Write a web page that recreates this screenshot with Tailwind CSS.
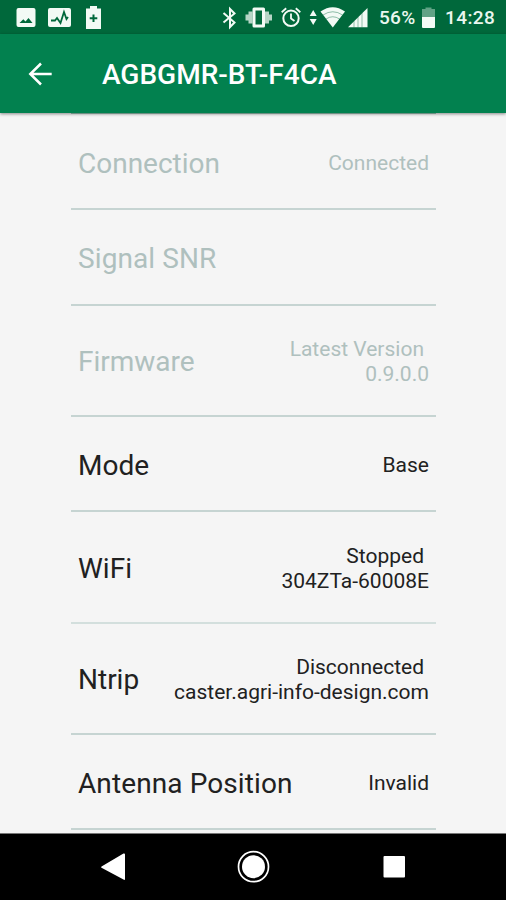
<!DOCTYPE html>
<html lang="en">
<head>
<meta charset="utf-8">
<title>AGBGMR-BT-F4CA</title>
<script src="https://cdn.jsdelivr.net/npm/@tailwindcss/browser@4"></script>
</head>
<body class="w-[506px] h-[900px] overflow-hidden bg-[#f5f5f5] font-['Roboto',sans-serif] flex flex-col">
  <div class="h-[34px] shrink-0 bg-[#00683b] text-[#eaf7ef]">
    <div class="h-full flex items-center relative">
      <svg class="w-full h-[34px]" viewBox="0 0 506 34" fill="#f3faf5">
        <!-- picture -->
        <path fill-rule="evenodd" d="M18.500 8h15a2 2 0 0 1 2 2v15a2 2 0 0 1-2 2h-15a2 2 0 0 1-2-2V10a2 2 0 0 1 2-2zM19.500 23h13l-4-5-3 3.500-2.200-2.300z"/>
        <!-- activity -->
        <rect x="48" y="8" width="23" height="19" rx="2"/>
        <path d="M51 20.500h4l2-2.500 3.500 5 3.500-11 2.500 7 1.500-2" fill="none" stroke="#00683b" stroke-width="1.800"/>
        <!-- battery saver -->
        <path fill-rule="evenodd" d="M90 6h7v2.500h4V29H86V8.500h4zM92.500 14.500v2.800h-2.800v2h2.800v2.800h2v-2.800h2.800v-2h-2.800v-2.800z"/>
        <!-- bluetooth -->
        <path d="M223.500 13l11 9.500-4.500 4.500V9l4.500 4.500-11 9" fill="none" stroke="#f3faf5" stroke-width="2"/>
        <!-- vibrate -->
        <path fill-rule="evenodd" d="M254 7.500h9.500a1.500 1.500 0 0 1 1.500 1.500v17a1.500 1.500 0 0 1-1.500 1.500H254a1.500 1.500 0 0 1-1.500-1.500V9a1.500 1.500 0 0 1 1.500-1.500zM255.500 10.500v14h6.500v-14z"/>
        <path d="M248.500 11.500h4v12h-4zM265 11.500h4v12h-4zM245.500 14.500h3v6h-3zM269 14.500h3v6h-3z" opacity=".75"/>
        <!-- alarm -->
        <circle cx="291" cy="18.300" r="7.700" fill="none" stroke="#f3faf5" stroke-width="2"/>
        <path d="M291 13.500v5l3.500 2.500M281.700 12.200l4.500-3.900M300.300 12.200l-4.500-3.900" fill="none" stroke="#f3faf5" stroke-width="1.800"/>
        <!-- data arrows -->
        <path d="M313.200 10l3.500 6h-7zM313.200 25l-3.500-6h7z"/>
        <!-- wifi -->
        <path d="M332.800 27.500L320.500 11.500Q332.800 3 345 11.500z"/>
        <path d="M323 15q9.800-6.500 19.600 0M326 19q6.800-4.500 13.600 0" fill="none" stroke="#00683b" stroke-width=".7" opacity=".6"/>
        <!-- cellular -->
        <path d="M348 27.300L367.500 8v19.300z"/>
        <path d="M354 21v6.300M358 17v10.300M362 13v14.300" stroke="#00683b" stroke-width=".8" opacity=".5"/>
        <!-- battery -->
        <path d="M425.500 7.500h6V9h3.500v8.500h-13V9h3.500z" opacity=".4"/>
        <path d="M422 17h13v10a1 1 0 0 1-1 1h-11a1 1 0 0 1-1-1z"/>
      </svg>
      <span class="absolute left-[379px] top-[7px] text-[19px] leading-[22px] font-medium tracking-[0.3px] whitespace-nowrap">56%</span>
      <span class="absolute left-[445px] top-[7px] text-[19px] leading-[22px] font-medium tracking-[0.4px] whitespace-nowrap">14:28</span>
    </div>
  </div>
  <header class="h-[79px] shrink-0 bg-[#02814f] flex items-center pl-[28px] shadow-[0_1px_3px_rgba(0,0,0,0.45)] relative z-10">
    <svg class="w-[24px] h-[24px] shrink-0" viewBox="0 0 24 24" fill="none" stroke="#fff" stroke-width="2.500"><path d="M23.700 12H2.500M13 1.500L2.300 12 13 22.500"/></svg>
    <h1 class="ml-[50px] pt-[3px] text-[28px] leading-[32px] font-medium text-white whitespace-nowrap">AGBGMR-BT-F4CA</h1>
    <div class="absolute left-[71px] bottom-[-1px] w-[365px] h-px bg-[#6f8f83]"></div>
  </header>
  <main class="w-[365px] ml-[71px] h-[720px] shrink-0 overflow-hidden text-[28px] leading-[33px] text-[#212121] whitespace-nowrap">
    <section class="h-[97px] pt-[5px] px-[7px] border-b-2 border-[#c6d4d2] flex items-center justify-between text-[#afc0be]">
      <span>Connection</span><span class="text-[21px] leading-[25px]">Connected</span>
    </section>
    <section class="h-[96px] pt-[2px] px-[7px] border-b-2 border-[#c6d4d2] flex items-center justify-between text-[#afc0be]">
      <span class="tracking-[0.1px]">Signal SNR</span>
    </section>
    <section class="h-[111px] pt-[2px] px-[7px] border-b-2 border-[#c6d4d2] flex items-center justify-between text-[#afc0be]">
      <span>Firmware</span><span class="text-[21px] leading-[25px] text-right"><span class="block pr-[5px]">Latest Version</span>0.9.0.0</span>
    </section>
    <section class="h-[95px] pt-[4px] px-[7px] border-b-2 border-[#c6d4d2] flex items-center justify-between">
      <span>Mode</span><span class="text-[21px] leading-[25px]">Base</span>
    </section>
    <section class="h-[112px] pt-[3px] px-[7px] border-b-2 border-[#d3dfdd] flex items-center justify-between">
      <span>WiFi</span><span class="text-[21px] leading-[25px] text-right"><span class="block pr-[5px]">Stopped</span>304ZTa-60008E</span>
    </section>
    <section class="h-[111px] pt-[2px] px-[7px] border-b-2 border-[#c6d4d2] flex items-center justify-between">
      <span>Ntrip</span><span class="text-[21px] leading-[25px] text-right"><span class="block pr-[5px]">Disconnected</span>caster.agri-info-design.com</span>
    </section>
    <section class="h-[95px] pt-[4px] px-[7px] border-b-2 border-[#c6d4d2] flex items-center justify-between">
      <span class="tracking-[0.1px]">Antenna Position</span><span class="text-[21px] leading-[25px]">Invalid</span>
    </section>
  </main>
  <nav class="h-[67px] shrink-0 bg-black border-t border-[#777]">
    <svg class="w-full h-[66px]" viewBox="0 0 506 66" fill="#fff">
      <path d="M101.500 32.500L123.500 19.500Q125 19 125 20.500V45Q125 46.500 123.500 45.500L101.500 33.800Q100.600 33.200 101.500 32.500z"/>
      <circle cx="253.500" cy="32.700" r="11.500"/>
      <circle cx="253.500" cy="32.700" r="15" fill="none" stroke="#fff" stroke-width="1.700"/>
      <rect x="383.500" y="22" width="21.500" height="21.500" rx="1"/>
    </svg>
  </nav>
</body>
</html>
